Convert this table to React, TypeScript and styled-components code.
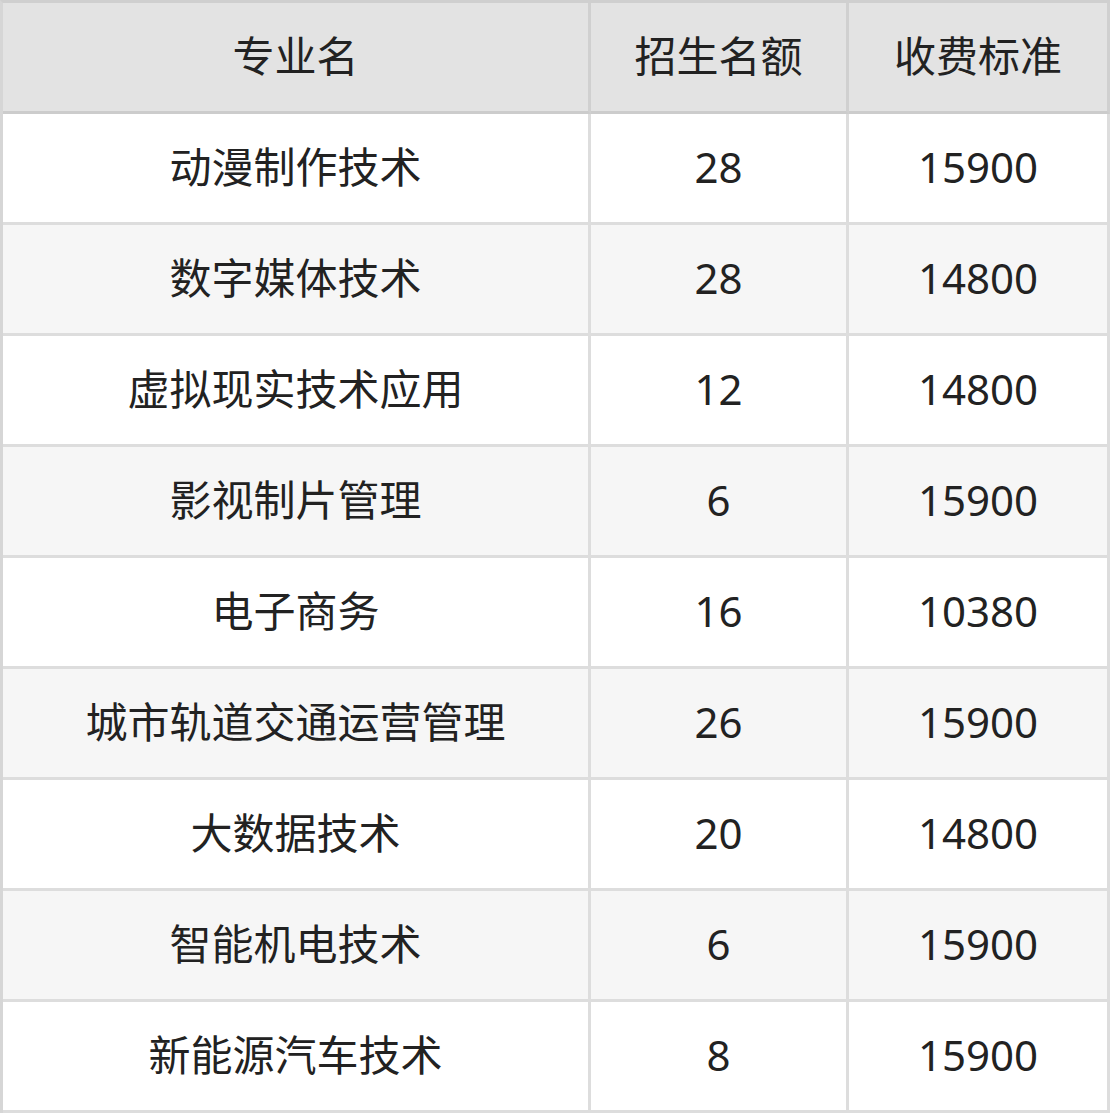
import React from "react";
import styled, { createGlobalStyle } from "styled-components";

const Global = createGlobalStyle`
  html, body { margin: 0; padding: 0; background: #ffffff; }
  body { font-family: "Noto Sans", "Noto Sans CJK SC", sans-serif; }
`;

const Table = styled.div`
  width: 1110px;
  box-sizing: border-box;
  display: grid;
  grid-template-columns: 588px 258px 261px;
  border-top: 3px solid #cfcfcf;
  border-left: 3px solid #d6d6d6;
`;

const Cell = styled.div<{ $head?: boolean; $alt?: boolean }>`
  display: flex;
  align-items: center;
  justify-content: center;
  font-family: "Noto Sans", "Noto Sans CJK SC", sans-serif;
  font-size: 42px;
  line-height: 1.2;
  color: #222222;
  background: ${(p) => (p.$head ? "#e3e3e3" : p.$alt ? "#f6f6f6" : "#ffffff")};
  border-right: 3px solid ${(p) => (p.$head ? "#d0d0d0" : "#dddddd")};
  border-bottom: 3px solid ${(p) => (p.$head ? "#cccccc" : "#dddddd")};
  padding-bottom: 1px;
  box-sizing: content-box;
  height: 107px;
`;

const rows: [string, string, string][] = [
  ["动漫制作技术", "28", "15900"],
  ["数字媒体技术", "28", "14800"],
  ["虚拟现实技术应用", "12", "14800"],
  ["影视制片管理", "6", "15900"],
  ["电子商务", "16", "10380"],
  ["城市轨道交通运营管理", "26", "15900"],
  ["大数据技术", "20", "14800"],
  ["智能机电技术", "6", "15900"],
  ["新能源汽车技术", "8", "15900"],
];

export default function App() {
  return (
    <>
      <Global />
      <Table>
        {["专业名", "招生名额", "收费标准"].map((h) => (
          <Cell key={h} $head>
            {h}
          </Cell>
        ))}
        {rows.map((r, i) =>
          r.map((c, j) => (
            <Cell key={`${i}-${j}`} $alt={i % 2 === 1}>
              {c}
            </Cell>
          ))
        )}
      </Table>
    </>
  );
}
